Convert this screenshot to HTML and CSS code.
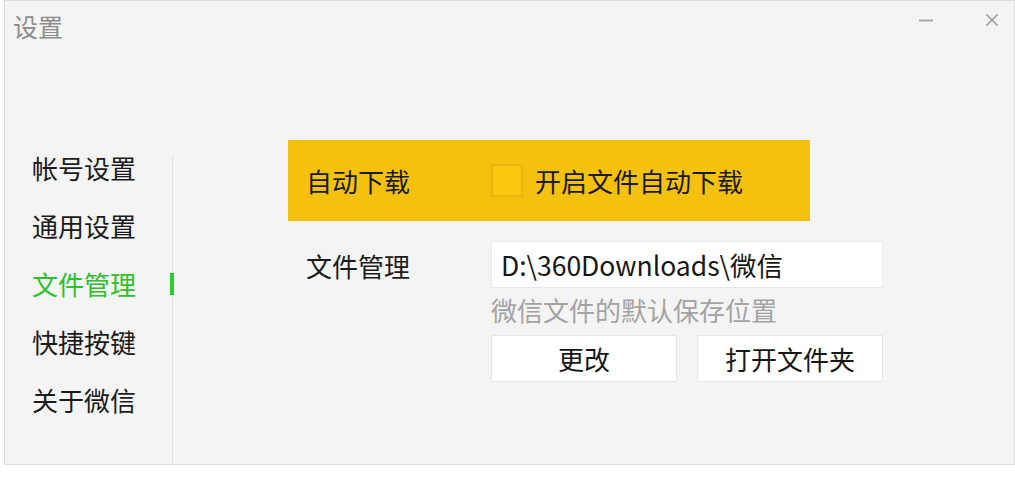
FILE: index.html
```html
<!DOCTYPE html>
<html lang="zh-CN">
<head>
<meta charset="utf-8">
<title>设置</title>
<link rel="stylesheet" href="styles.css">
</head>
<body>
<div class="window">
  <div class="titlebar">
    <div class="title">设置</div>
    <div class="controls">
      <svg class="ctl" width="16" height="16" viewBox="0 0 16 16"><path d="M1 8.5h14" stroke="#a8a8a8" stroke-width="2"/></svg>
      <svg class="ctl" width="16" height="16" viewBox="0 0 16 16"><path d="M2.5 2.5l11 11M13.5 2.5l-11 11" stroke="#9a9a9a" stroke-width="1.6"/></svg>
    </div>
  </div>
  <div class="main">
    <nav class="sidebar">
      <div class="nav-item">帐号设置</div>
      <div class="nav-item">通用设置</div>
      <div class="nav-item active">文件管理</div>
      <div class="nav-item">快捷按键</div>
      <div class="nav-item">关于微信</div>
    </nav>
    <section class="content">
      <div class="row highlight">
        <div class="label">自动下载</div>
        <label class="check">
          <span class="box"></span>
          <span>开启文件自动下载</span>
        </label>
      </div>
      <div class="row files">
        <div class="label">文件管理</div>
        <div class="field">
          <div class="input">D:\360Downloads\微信</div>
          <div class="hint">微信文件的默认保存位置</div>
          <div class="buttons">
            <button class="btn">更改</button>
            <button class="btn">打开文件夹</button>
          </div>
        </div>
      </div>
    </section>
  </div>
</div>
</body>
</html>
```

FILE: styles.css
```css
* { box-sizing: border-box; }
html, body { margin: 0; padding: 0; background: #ffffff; }
body {
  font-family: "Noto Sans CJK SC", "Noto Sans", sans-serif;
  color: #1b1b1b;
}
.window {
  margin-left: 4px;
  width: 1011px;
  height: 465px;
  border: 1px solid #dedede;
  background: #f4f4f4;
  display: flex;
  flex-direction: column;
}
.titlebar {
  height: 139px;
  display: flex;
  justify-content: space-between;
  align-items: flex-start;
}
.title {
  margin: 7px 0 0 8px;
  font-size: 25px;
  line-height: 36px;
  color: #8c8c8c;
}
.controls {
  display: flex;
  gap: 50px;
  margin: 11px 14px 0 0;
}
.ctl { display: block; }
.main {
  flex: 1;
  display: flex;
}
.sidebar {
  width: 168px;
  margin-top: 15px;
  border-right: 1px solid #e2e2e2;
  display: flex;
  flex-direction: column;
  gap: 32px;
}
.nav-item {
  position: relative;
  height: 26px;
  line-height: 26px;
  font-size: 26px;
  padding-left: 27px;
  white-space: nowrap;
}
.nav-item.active { color: #2ec12b; }
.nav-item.active::after {
  content: "";
  position: absolute;
  right: -2px;
  top: 2px;
  width: 4px;
  height: 22px;
  background: #2ad02a;
}
.content {
  padding-left: 115px;
  display: flex;
  flex-direction: column;
  gap: 20px;
}
.row {
  display: flex;
  font-size: 26px;
}
.label {
  width: 185px;
  flex: none;
}
.highlight {
  width: 522px;
  height: 81px;
  background: #f5c10f;
  align-items: center;
  padding-left: 18px;
}
.check {
  display: flex;
  align-items: center;
  gap: 12px;
}
.box {
  width: 32px;
  height: 33px;
  background: #fcc80f;
  border: 2px solid #e8b60c;
}
.files { padding-left: 18px; }
.files .label { line-height: 50px; }
.field {
  display: flex;
  flex-direction: column;
}
.input {
  width: 392px;
  height: 47px;
  background: #ffffff;
  border: 1px solid #e8e8e8;
  padding-left: 9px;
  line-height: 45px;
  font-size: 26.5px;
  color: #161616;
}
.hint {
  font-size: 26px;
  color: #a3a3a3;
  line-height: 28px;
  margin: 8px 0 11px;
}
.buttons {
  display: flex;
  gap: 20px;
}
.btn {
  width: 186px;
  height: 47px;
  background: #ffffff;
  border: 1px solid #e6e6e6;
  font-family: inherit;
  font-size: 26px;
  color: #161616;
  padding: 0;
}
```
